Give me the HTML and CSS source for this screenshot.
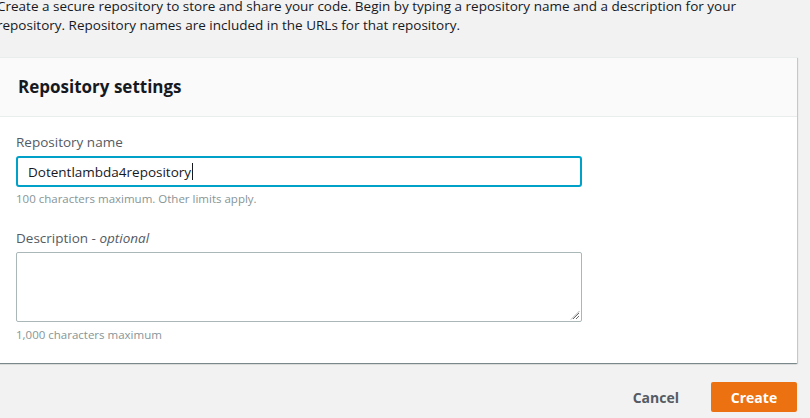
FILE: index.html
```html
<!DOCTYPE html>
<html lang="en">
<head>
<meta charset="utf-8">
<title>Create repository</title>
<link rel="stylesheet" href="styles.css">
</head>
<body>
<div class="page">
  <p class="intro">Create a secure repository to store and share your code. Begin by typing a repository name and a description for your repository. Repository names are included in the URLs for that repository.</p>
  <section class="card">
    <header class="card-header"><h2>Repository settings</h2></header>
    <div class="card-body">
      <div class="field">
        <label class="label">Repository name</label>
        <div class="input focused"><span class="value">Dotentlambda4repository</span><span class="caret"></span></div>
        <div class="hint">100 characters maximum. Other limits apply.</div>
      </div>
      <div class="field">
        <label class="label">Description - <i>optional</i></label>
        <div class="textarea">
          <svg class="grip" width="10" height="10" viewBox="0 0 10 10"><path d="M9 3 L3 9 M9 6 L6 9" stroke="#6b6b6b" stroke-width="1" fill="none"/><path d="M9.5 1 L1 9.5" stroke="#9a9a9a" stroke-width="0.8" fill="none"/></svg>
        </div>
        <div class="hint hint-ta">1,000 characters maximum</div>
      </div>
    </div>
  </section>
  <div class="actions">
    <button class="btn-link">Cancel</button>
    <button class="btn-primary">Create</button>
  </div>
</div>
</body>
</html>
```
FILE: styles.css
```css
html, body {
  margin: 0;
  padding: 0;
  background: #f2f2f2;
}
body {
  font-family: "Open Sans", "Liberation Sans", sans-serif;
  color: #16191f;
  overflow: hidden;
}
.page {
  margin-left: -3px;
  width: 800px;
}
.intro {
  margin: -3px 0 0 0;
  font-size: 13.5px;
  line-height: 19px;
  color: #16191f;
  width: 760px;
}
.card {
  margin-top: 22px;
  background: #fff;
  border-top: 1px solid #eaeded;
  box-shadow: 0 1px 1px 0 rgba(0,28,36,.3), 1px 1px 1px 0 rgba(0,28,36,.15), -1px 1px 1px 0 rgba(0,28,36,.15);
}
.card-header {
  background: #fafafa;
  border-bottom: 1px solid #eaeded;
  padding: 17px 21px 0;
  height: 41px;
}
.card-header h2 {
  margin: 0;
  font-size: 17px;
  font-weight: 700;
  line-height: 24px;
}
.card-body {
  padding: 15px 19px 20px;
}
.field + .field {
  margin-top: 21px;
}
.label {
  display: block;
  font-size: 13.5px;
  line-height: 20px;
  color: #545b64;
  margin-bottom: 4px;
}
.label i { font-style: italic; }
.input {
  width: 552px;
  height: 27px;
  border: 2px solid #00a1c9;
  border-radius: 3px;
  display: flex;
  align-items: center;
  padding-left: 10px;
  font-size: 13.5px;
  color: #16191f;
  box-sizing: content-box;
}
.caret {
  display: inline-block;
  width: 1px;
  height: 17px;
  background: #16191f;
  margin-left: 1px;
}
.hint {
  font-size: 11.5px;
  line-height: 16px;
  color: #879596;
  margin-top: 4px;
}
.hint-ta {
  margin-top: 5px;
}
.textarea {
  position: relative;
  width: 564px;
  height: 68px;
  border: 1px solid #aab7b8;
  border-radius: 2px;
  background: #fff;
}
.grip {
  position: absolute;
  right: 1px;
  bottom: 1px;
}
.actions {
  display: flex;
  justify-content: flex-end;
  align-items: center;
  margin-top: 19px;
  gap: 14px;
}
.btn-link, .btn-primary {
  font-family: inherit;
  font-size: 14px;
  font-weight: 700;
  border: none;
  cursor: pointer;
}
.btn-link {
  background: transparent;
  color: #545b64;
  padding: 0 18px;
  height: 30px;
}
.btn-primary {
  background: #ec7211;
  color: #fff;
  border-radius: 2px;
  width: 86px;
  height: 30px;
}
```
